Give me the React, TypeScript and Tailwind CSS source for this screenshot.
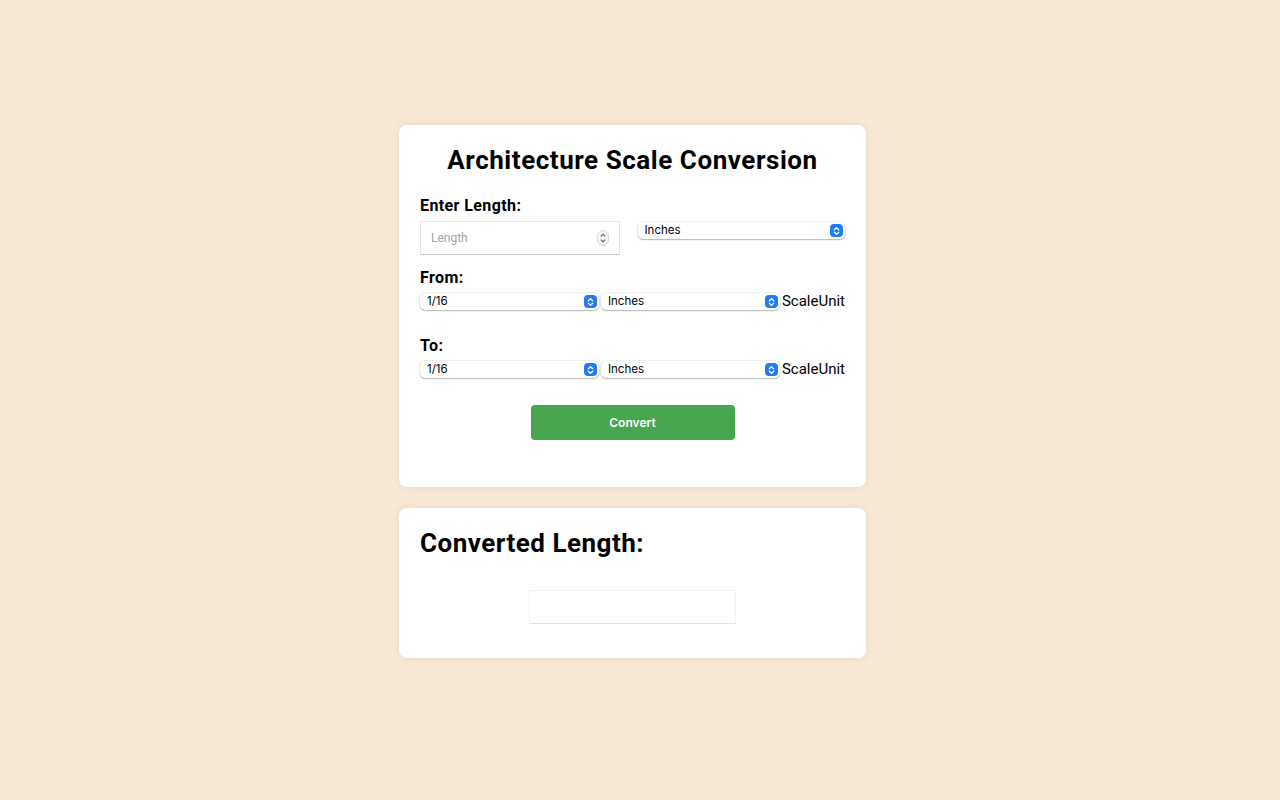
import { useState } from 'react';

const scales = ['1/16', '1/8', '3/16', '1/4', '3/8', '1/2', '3/4', '1', '1 1/2', '3'];
const units = ['Inches', 'Feet', 'Millimeters', 'Centimeters', 'Meters'];

function Stepper() {
  return (
    <svg width="12" height="16" viewBox="0 0 12 16" className="pointer-events-none absolute right-[11px] top-1/2 -translate-y-1/2">
      <rect x="0.5" y="0.5" width="11" height="15" rx="5.5" fill="#f6f6f6" stroke="#c8c8c8" strokeWidth="0.7" />
      <path d="M3.8 6.3 L6 4.2 L8.2 6.3" fill="none" stroke="#555" strokeWidth="1.1" />
      <path d="M3.8 9.7 L6 11.8 L8.2 9.7" fill="none" stroke="#555" strokeWidth="1.1" />
    </svg>
  );
}

function MacSelect({
  value,
  options,
  onChange,
  className,
}: {
  value: string;
  options: string[];
  onChange: (v: string) => void;
  className: string;
}) {
  return (
    <div className={`relative h-[17px] ${className}`}>
      <select
        value={value}
        onChange={(e) => onChange(e.target.value)}
        className="block h-[17px] w-full appearance-none rounded-[5px] bg-white py-0 pl-[7px] pr-5 font-['Inter',sans-serif] text-[11.5px] leading-[17px] text-black shadow-[0_0_0_0.5px_rgba(0,0,0,0.12),0_1px_1.5px_rgba(0,0,0,0.25)] outline-none"
      >
        {options.map((o) => (
          <option key={o}>{o}</option>
        ))}
      </select>
      <span className="pointer-events-none absolute right-[2px] top-[2px] flex h-[13px] w-[13px] items-center justify-center rounded-[4px] bg-[#1f7cf6]">
        <svg width="7" height="10" viewBox="0 0 7 10">
          <path d="M1.3 3.8 L3.5 1.7 L5.7 3.8" fill="none" stroke="white" strokeWidth="1.3" strokeLinecap="round" strokeLinejoin="round" />
          <path d="M1.3 6.2 L3.5 8.3 L5.7 6.2" fill="none" stroke="white" strokeWidth="1.3" strokeLinecap="round" strokeLinejoin="round" />
        </svg>
      </span>
    </div>
  );
}

export default function App() {
  const [length, setLength] = useState('');
  const [lengthUnit, setLengthUnit] = useState('Inches');
  const [fromScale, setFromScale] = useState('1/16');
  const [fromUnit, setFromUnit] = useState('Inches');
  const [toScale, setToScale] = useState('1/16');
  const [toUnit, setToUnit] = useState('Inches');
  const [result, setResult] = useState('');

  const toInches = (v: number, u: string) => {
    const f: Record<string, number> = { Inches: 1, Feet: 12, Millimeters: 1 / 25.4, Centimeters: 1 / 2.54, Meters: 39.3701 };
    return v * f[u];
  };
  const parseScale = (s: string) =>
    s.split(' ').reduce((sum, part) => {
      const [a, b] = part.split('/').map(Number);
      return sum + (b ? a / b : a);
    }, 0);

  const handleConvert = () => {
    const v = parseFloat(length);
    if (isNaN(v)) {
      setResult('');
      return;
    }
    const real = toInches(v, lengthUnit) / toInches(parseScale(fromScale), fromUnit);
    const out = real * toInches(parseScale(toScale), toUnit);
    setResult(`${out.toFixed(3)} ${lengthUnit}`);
  };

  return (
    <div className="min-h-screen bg-[#f9e8d4] pr-[15px] pt-[125px] font-['Roboto',sans-serif] text-black">
      <div className="mx-auto flex w-[467px] flex-col gap-[21px]">
        <div className="rounded-[8px] bg-white px-[21px] pb-[47px] pt-[20px] shadow-[0_0_8px_rgba(0,0,0,0.08)]">
          <h1 className="text-center text-[26px] font-bold leading-[30px] tracking-[0.55px]">Architecture Scale Conversion</h1>

          <div className="mt-[22px] text-[16px] font-bold leading-[18px] tracking-[0.4px]">Enter Length:</div>
          <div className="mt-[6px] flex items-start gap-[18px]">
            <div className="relative h-[34px] w-[200px]">
              <input
                type="number"
                placeholder="Length"
                value={length}
                onChange={(e) => setLength(e.target.value)}
                className="h-full w-full border border-[#e6e6e6] border-b-[#c6c6c6] bg-white px-[10px] text-[12px] outline-none placeholder:text-[#a3a3a3] [appearance:textfield] [&::-webkit-inner-spin-button]:appearance-none"
              />
              <Stepper />
            </div>
            <MacSelect value={lengthUnit} options={units} onChange={setLengthUnit} className="mt-[1px] w-[208px]" />
          </div>

          <div className="mt-[14px] text-[16px] font-bold leading-[18px] tracking-[0.4px]">From:</div>
          <div className="mt-[6px] flex items-start gap-[2px]">
            <MacSelect value={fromScale} options={scales} onChange={setFromScale} className="w-[180px]" />
            <MacSelect value={fromUnit} options={units} onChange={setFromUnit} className="w-[180px]" />
            <span className="h-[17px] text-[15px] leading-[17px]">ScaleUnit</span>
          </div>

          <div className="mt-[27px] text-[16px] font-bold leading-[18px] tracking-[0.4px]">To:</div>
          <div className="mt-[6px] flex items-start gap-[2px]">
            <MacSelect value={toScale} options={scales} onChange={setToScale} className="w-[180px]" />
            <MacSelect value={toUnit} options={units} onChange={setToUnit} className="w-[180px]" />
            <span className="h-[17px] text-[15px] leading-[17px]">ScaleUnit</span>
          </div>

          <div className="mt-[27px] flex justify-center">
            <button
              onClick={handleConvert}
              className="h-[35px] w-[204px] rounded-[4px] bg-[#47a64f] font-['Inter',sans-serif] text-[12px] font-semibold text-white"
            >
              Convert
            </button>
          </div>
        </div>

        <div className="rounded-[8px] bg-white px-[21px] pb-[34px] pt-[20px] shadow-[0_0_8px_rgba(0,0,0,0.08)]">
          <h2 className="text-[26px] font-bold leading-[30px] tracking-[0.5px]">Converted Length:</h2>
          <div className="mt-[32px] flex justify-center">
            <div className="flex h-[34px] w-[207px] items-center justify-center border border-[#f3f3f3] border-b-[#e2e2e2] text-[14px]">
              {result}
            </div>
          </div>
        </div>
      </div>
    </div>
  );
}
